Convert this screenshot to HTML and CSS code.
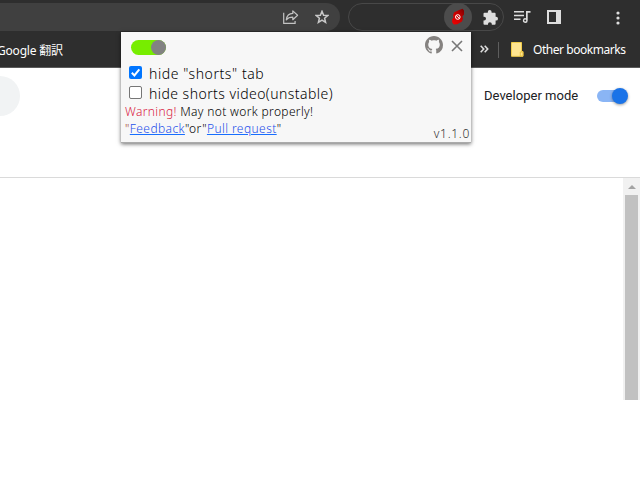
FILE: index.html
```html
<!DOCTYPE html>
<html lang="en">
<head>
<meta charset="utf-8">
<title>Extensions</title>
<link rel="stylesheet" href="styles.css">
</head>
<body>
<div class="browser">
  <header class="toolbar">
    <div class="address">
      <svg width="16" height="14" viewBox="0 0 16 14" fill="none" stroke="#c3c3c3" stroke-width="1.2"><path d="M.7 2.8v10.5h11.4v-2.2"/><path d="M9.8.9v2.5C6 3.5 3.8 5.7 3.3 9.8 5 7.7 7 7.2 9.8 7.2v2.5l4.8-4.4z" stroke-linejoin="round"/></svg>
      <svg width="14" height="14" viewBox="0 0 14 14" fill="none" stroke="#c8c8c8" stroke-width="1.5"><path d="m7 1.3 1.6 3.9 4.2.3-3.2 2.7 1 4.2L7 10.2l-3.6 2.2 1-4.2-3.2-2.7 4.2-.3z"/></svg>
    </div>
    <div class="extensions">
      <span class="active-extension">
        <svg width="14" height="18" viewBox="0 0 14 18"><defs><linearGradient id="red" x1="1" y1="0" x2="0" y2="1"><stop offset="0" stop-color="#700"/><stop offset=".45" stop-color="#c80000"/><stop offset="1" stop-color="#f00000"/></linearGradient></defs><path d="M7.5 2.2 11.6.8 13 2.6v4L11.3 8.4 12 10.4 11 13.6l-4.7 2.7-3.5.2-1.6-2V11l1.5-1.4L2 7.4l1-3z" fill="url(#red)"/><circle cx="6.8" cy="9" r="2.3" fill="none" stroke="#fff" stroke-width="1"/><path d="m5.3 7.4 3.2 3.2" stroke="#fff"/></svg>
      </span>
      <svg class="puzzle" width="15" height="15" viewBox="0 0 15 15" fill="#dedede"><path d="M1.5 2.8h3.3V2a1.9 1.9 0 0 1 3.8 0v.8h3a1 1 0 0 1 1 1v3h.5a1.9 1.9 0 0 1 0 3.8h-.5v3.2a1 1 0 0 1-1 1H8.8v-.7a1.9 1.9 0 0 0-3.8 0v.7H1.5a1 1 0 0 1-1-1v-3.3h.6a1.9 1.9 0 0 0 0-3.8H.5V3.8a1 1 0 0 1 1-1z"/></svg>
    </div>
    <svg class="music" width="17" height="14" viewBox="0 0 17 14" fill="#dedede"><path d="M0 1h10v1.6H0zM0 4.7h10v1.6H0zM0 8.4h6.5V10H0zM12 1h4.5v1.7h-2.8v7.7A2.4 2.4 0 1 1 12 8.2z"/><circle cx="11.2" cy="10.5" r="1" fill="#2e2e2e"/></svg>
    <svg class="panel" width="14" height="14" viewBox="0 0 14 14"><path d="M0 0h14v14H0zM2 2v10h7V2z" fill="#dedede" fill-rule="evenodd"/></svg>
    <svg class="more" width="4" height="14" viewBox="0 0 4 14" fill="#dedede"><circle cx="2" cy="2" r="1.6"/><circle cx="2" cy="7" r="1.6"/><circle cx="2" cy="12" r="1.6"/></svg>
  </header>
  <nav class="bookmarks">
    <span class="translate">Google 翻訳</span>
    <svg class="chevrons" width="9" height="8" viewBox="0 0 9 8" fill="none" stroke="#dedede" stroke-width="1.6"><path d="m.7.8 3 3.2-3 3.2M4.7.8l3 3.2-3 3.2"/></svg>
    <span class="separator"></span>
    <svg class="folder" width="13" height="15" viewBox="0 0 13 15"><path d="M.5.5h10v9H12v4.8H.5z" fill="#ffe591" stroke="#f1cc4a"/><path d="M9.3 14v-4h2.6v4z" fill="#ffe591" stroke="#e6bd35" stroke-width=".8"/></svg>
    <span class="other">Other bookmarks</span>
  </nav>
  <main>
    <section class="page-head">
      <span class="search"></span>
      <span class="dev-label">Developer mode</span>
      <span class="dev-switch"><i></i></span>
    </section>
    <div class="page-body">
      <div class="scrollbar"><span class="arrow"></span><span class="thumb"></span></div>
    </div>
  </main>
  <aside class="popup">
    <div class="popup-top">
      <span class="power"><i></i></span>
      <svg class="github" width="18" height="18" viewBox="0 0 16 16" fill="#858280"><path d="M8 0C3.58 0 0 3.58 0 8c0 3.54 2.29 6.53 5.47 7.59.4.07.55-.17.55-.38 0-.19-.01-.82-.01-1.49-2.01.37-2.53-.49-2.69-.94-.09-.23-.48-.94-.82-1.13-.28-.15-.68-.52-.01-.53.63-.01 1.08.58 1.23.82.72 1.21 1.87.87 2.33.66.07-.52.28-.87.51-1.07-1.78-.2-3.64-.89-3.64-3.95 0-.87.31-1.59.82-2.15-.08-.2-.36-1.02.08-2.12 0 0 .67-.21 2.2.82.64-.18 1.32-.27 2-.27s1.36.09 2 .27c1.53-1.04 2.2-.82 2.2-.82.44 1.1.16 1.92.08 2.12.51.56.82 1.27.82 2.15 0 3.07-1.87 3.75-3.65 3.95.29.25.54.73.54 1.48 0 1.07-.01 1.93-.01 2.2 0 .21.15.46.55.38A8.01 8.01 0 0 0 16 8c0-4.42-3.58-8-8-8z"/></svg>
      <svg class="close" width="12" height="12" viewBox="0 0 12 12" stroke="#777" stroke-width="1.6"><path d="m1 1 10 10M11 1 1 11"/></svg>
    </div>
    <div class="option"><span class="box checked"><svg width="13" height="13" viewBox="0 0 13 13" fill="none" stroke="#fff" stroke-width="2"><path d="m2.8 6.8 2.6 2.6 4.9-6"/></svg></span><span class="opt1">hide "shorts" tab</span></div>
    <div class="option second"><span class="box"></span><span class="opt2">hide shorts video(unstable)</span></div>
    <div class="note"><span class="warn"><em>Warning!</em> May not work properly!</span></div>
    <div class="note links"><span class="q1">"</span><u class="l1">Feedback</u><span class="q2">"or"</span><u class="l2">Pull request</u><span>"</span><span class="version">v1.1.0</span></div>
  </aside>
</div>
</body>
</html>
```
FILE: styles.css
```css
* { box-sizing: border-box; }
body { margin: 0; background: #fff; font-family: "Noto Sans", "Noto Sans CJK JP", sans-serif; }
svg { display: block; flex: none; }
.browser { position: relative; width: 640px; height: 480px; overflow: hidden; }
.toolbar { height: 32px; background: #2e2e2e; display: flex; align-items: flex-start; padding-top: 3px; }
.address { width: 340px; height: 28px; background: #404040; border-radius: 0 14px 14px 0; display: flex; align-items: center; justify-content: flex-end; gap: 16px; padding-right: 11px; }
.extensions { width: 156px; height: 28px; margin-left: 8px; border: 1px solid #484848; border-radius: 14px; display: flex; align-items: center; justify-content: flex-end; padding-right: 5px; }
.active-extension { width: 28px; height: 28px; flex: none; border-radius: 50%; background: #4c4c4c; display: flex; align-items: center; justify-content: center; margin-right: 11px; }
.music { margin: 7px 0 0 10px; }
.panel { margin: 7px 0 0 16px; }
.more { margin: 8px 0 0 55px; }
.bookmarks { height: 36px; background: #2e2e2e; border-bottom: 1px solid #5b5b5b; display: flex; align-items: center; color: #fff; font-size: 12px; white-space: nowrap; }
.translate { width: 480px; margin-left: -3px; letter-spacing: -.2px; }
.chevrons { margin: -2px 0 0 3px; }
.separator { width: 1px; height: 16px; background: #5e5e5e; margin-left: 9px; }
.folder { margin-left: 12px; }
.other { margin-left: 9px; letter-spacing: -.45px; }
.page-head { height: 110px; border-bottom: 1px solid #dadada; display: flex; align-items: flex-start; padding-top: 8px; }
.search { width: 20px; height: 40px; background: #f1f3f4; border-radius: 0 20px 20px 0; }
.dev-label { width: 113px; margin-left: 464px; line-height: 40px; color: #202124; font-family: Roboto, sans-serif; font-size: 13px; letter-spacing: .02px; white-space: nowrap; }
.dev-switch { width: 28px; height: 12px; margin-top: 14px; border-radius: 6px; background: #8ab5f5; display: flex; align-items: center; justify-content: flex-end; }
.dev-switch i { width: 16px; height: 16px; flex: none; margin-right: -3px; border-radius: 50%; background: #1a73e8; box-shadow: 0 1px 3px rgba(0,0,0,.4); }
.page-body { height: 222px; display: flex; justify-content: flex-end; }
.scrollbar { width: 17px; height: 222px; background: #f1f1f1; display: flex; flex-direction: column; align-items: center; }
.arrow { border: 4px solid transparent; border-top: 0; border-bottom-color: #a3a3a3; margin-top: 7px; }
.thumb { width: 13px; height: 205px; margin-top: 6px; background: #c1c1c1; }
.popup { position: absolute; left: 121px; top: 32px; width: 350px; height: 111px; padding: 0 1px 0 4px; background: #f7f7f7; border-bottom: 1px solid #aaa; box-shadow: 0 1px 4px rgba(0,0,0,.6); color: #000; font-weight: 300; }
.popup-top { height: 32px; display: flex; align-items: flex-start; }
.power { width: 35px; height: 15px; margin: 8px 0 0 6px; border-radius: 8px; background: #77ed00; display: flex; justify-content: flex-end; }
.power i { width: 15px; height: 15px; border-radius: 50%; background: #828282; }
.github { margin: 4px 0 0 259px; }
.close { margin: 8px 0 0 8px; }
.option { height: 20px; display: flex; align-items: center; padding-left: 4px; font-size: 14px; line-height: 20px; white-space: nowrap; }
.box { width: 13px; height: 13px; flex: none; border: 1px solid #767676; border-radius: 2px; background: #fff; margin: -3px 7px 0 0; }
.box.checked { border: 0; background: #0075ff; }
.opt1 { letter-spacing: .58px; }
.opt2 { letter-spacing: .45px; }
.second .opt2 { margin-top: -1px; }
.note { height: 17px; margin-top: -1px; display: flex; font-size: 12px; line-height: 17px; white-space: nowrap; letter-spacing: .35px; }
.note em { font-style: normal; color: #d9203f; }
.links { margin-top: 0; letter-spacing: .42px; }
.q1 { color: #a23c28; }
.l1, .l2 { color: #2450ea; text-underline-offset: 1px; text-decoration-color: #176eff; }
.version { margin: 5px 0 0 auto; color: #333; letter-spacing: .7px; }
```
